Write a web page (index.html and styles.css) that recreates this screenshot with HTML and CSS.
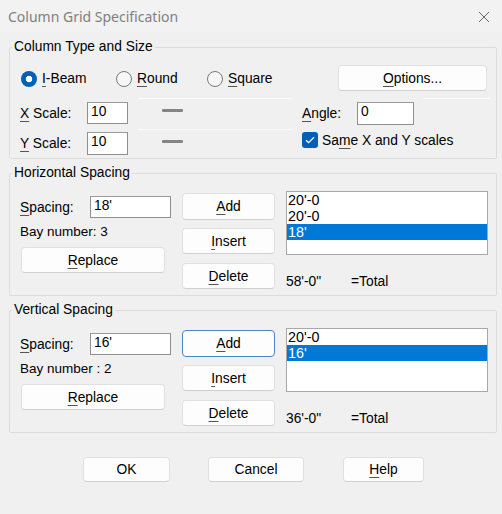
FILE: index.html
```html
<!DOCTYPE html>
<html>
<head>
<meta charset="utf-8">
<link rel="stylesheet" href="styles.css">
</head>
<body>
<div class="dialog">
  <div class="titlebar">
    <span class="title">Column Grid Specification</span>
    <svg class="close" width="12" height="12" viewBox="0 0 12 12"><path d="M1 1L11 11M11 1L1 11" stroke="#666" stroke-width="1" fill="none"/></svg>
  </div>
  <div class="content">
    <fieldset class="group g1">
      <legend>Column Type and Size</legend>
      <div class="type-row">
        <span class="radio-item w1"><span class="radio on"></span><span><u>I</u>-Beam</span></span>
        <span class="radio-item w2"><span class="radio"></span><span><u>R</u>ound</span></span>
        <span class="radio-item"><span class="radio"></span><span><u>S</u>quare</span></span>
        <span class="btn options"><u>O</u>ptions...</span>
      </div>
      <div class="scale-row r1">
        <span class="lbl"><u>X</u> Scale:</span>
        <span class="edit small">10</span>
        <span class="slider"><span class="dash"></span></span>
        <span class="lbl angle"><u>A</u>ngle:</span>
        <span class="edit angle-edit">0</span>
        <span class="slider short"></span>
      </div>
      <div class="scale-row r2">
        <span class="lbl"><u>Y</u> Scale:</span>
        <span class="edit small">10</span>
        <span class="slider"><span class="dash"></span></span>
        <span class="check"><svg width="10" height="8" viewBox="0 0 10 8"><path d="M1 4.2L3.6 6.6L9 1.2" stroke="#fff" stroke-width="1.3" fill="none"/></svg></span>
        <span class="check-text">Sa<u>m</u>e X and Y scales</span>
      </div>
    </fieldset>

    <fieldset class="group spacing">
      <legend>Horizontal Spacing</legend>
      <div class="sp-grid">
        <div class="left">
          <div class="sp-row"><span class="sp-lbl"><u>S</u>pacing:</span><span class="edit wide">18'</span></div>
          <div class="bay">Bay number: 3</div>
          <span class="btn replace"><u>R</u>eplace</span>
        </div>
        <div class="mid">
          <span class="btn act add"><u>A</u>dd</span>
          <span class="btn act ins"><u>I</u>nsert</span>
          <span class="btn act del"><u>D</u>elete</span>
        </div>
        <div class="right">
          <div class="list">
            <div class="item">20'-0</div>
            <div class="item">20'-0</div>
            <div class="item sel">18'</div>
          </div>
          <div class="total"><span class="tval">58'-0"</span><span>=Total</span></div>
        </div>
      </div>
    </fieldset>

    <fieldset class="group spacing">
      <legend>Vertical Spacing</legend>
      <div class="sp-grid">
        <div class="left">
          <div class="sp-row"><span class="sp-lbl"><u>S</u>pacing:</span><span class="edit wide">16'</span></div>
          <div class="bay">Bay number : 2</div>
          <span class="btn replace"><u>R</u>eplace</span>
        </div>
        <div class="mid">
          <span class="btn act add focus"><u>A</u>dd</span>
          <span class="btn act ins"><u>I</u>nsert</span>
          <span class="btn act del"><u>D</u>elete</span>
        </div>
        <div class="right">
          <div class="list">
            <div class="item">20'-0</div>
            <div class="item sel">16'</div>
          </div>
          <div class="total"><span class="tval">36'-0"</span><span>=Total</span></div>
        </div>
      </div>
    </fieldset>

    <div class="footer">
      <span class="btn ok">OK</span>
      <span class="btn cancel">Cancel</span>
      <span class="btn help"><u>H</u>elp</span>
    </div>
  </div>
</div>
</body>
</html>
```

FILE: styles.css
```css
html, body {
  margin: 0;
  padding: 0;
  background: #f0f0f0;
}
.dialog {
  width: 502px;
  height: 514px;
  overflow: hidden;
  background: #f0f0f0;
  font-family: "Liberation Sans", Arial, sans-serif;
  font-size: 13.3px;
  color: #000;
}
u {
  text-decoration: underline;
  text-underline-offset: 3px;
  text-decoration-thickness: 1px;
  text-decoration-color: #555;
}
.titlebar {
  height: 32px;
  display: flex;
  align-items: center;
  justify-content: space-between;
  padding: 0 12px 0 8px;
  background: #f2f2f2;
}
.title {
  font-family: "Noto Sans", "Open Sans", sans-serif;
  font-size: 14px;
  color: #808080;
}
.close {
  margin-top: 1px;
}
.content {
  padding: 7px 0 0 9px;
}
.group {
  margin: 0;
  padding: 0;
  width: 488px;
  box-sizing: border-box;
  border: 1px solid #dcdcdc;
  border-radius: 2px;
}
.group legend {
  margin-left: 2px;
  padding: 0 2px;
  line-height: 16px;
  font-size: 13.8px;
}
.spacing {
  margin-top: 6px;
}

/* group 1 */
.type-row {
  display: flex;
  align-items: center;
  height: 26px;
  margin-top: 10px;
  padding-left: 11px;
  font-size: 13.8px;
}
.radio-item {
  display: flex;
  align-items: center;
  gap: 5px;
}
.w1 { width: 95px; }
.w2 { width: 91px; }
.radio {
  width: 14px;
  height: 14px;
  border-radius: 50%;
  border: 1px solid #7a7a7a;
  background: #f7f7f7;
  flex: none;
  margin-top: 1px;
}
.radio.on {
  width: 16px;
  height: 16px;
  border: none;
  background: radial-gradient(circle, #fff 0 3px, #005fb8 3.6px);
}
.btn {
  display: flex;
  align-items: center;
  justify-content: center;
  box-sizing: border-box;
  background: #fdfdfd;
  border: 1px solid #e0e0e0;
  border-bottom-color: #d0d0d0;
  border-radius: 4px;
  font-size: 13.8px;
}
.options {
  margin-left: auto;
  margin-right: 9px;
  width: 149px;
  height: 26px;
}
.scale-row {
  display: flex;
  align-items: flex-start;
  padding-left: 10px;
  font-size: 13.8px;
}
.r1 { height: 31px; margin-top: 7px; }
.r2 { height: 29px; }
.lbl {
  width: 67px;
  line-height: 16px;
  margin-top: 8px;
}
.r2 .lbl { margin-top: 7px; }
.edit {
  box-sizing: border-box;
  background: #fff;
  border: 1px solid #8f8f8f;
  border-top-color: #9a9a9a;
  padding: 1px 3px;
  line-height: 16px;
  font-size: 13.8px;
}
.small {
  width: 41px;
  height: 22px;
  margin-top: 4px;
}
.r2 .small { margin-top: 3px; height: 23px; }
.slider {
  width: 154px;
  height: 20px;
  margin-left: 10px;
  border-top: 1px solid #fbfbfb;
}
.slider.short {
  width: 67px;
  margin-left: 9px;
}
.dash {
  display: block;
  width: 21px;
  height: 3px;
  margin: 10px 0 0 24px;
  background: #858585;
  border-radius: 1px;
}
.angle {
  width: 55px;
  margin-left: 10px;
}
.angle-edit {
  width: 57px;
  height: 23px;
  margin-top: 4px;
}
.check {
  width: 16px;
  height: 16px;
  margin: 3px 0 0 10px;
  border-radius: 3px;
  background: #005fb8;
  display: flex;
  align-items: center;
  justify-content: center;
}
.check-text {
  margin: 4px 0 0 4px;
  line-height: 16px;
  font-size: 13.8px;
}

/* spacing groups */
.sp-grid {
  display: grid;
  grid-template-columns: 172px 93px 1fr;
  height: 114px;
}
.left {
  padding: 15px 0 0 10px;
  display: flex;
  flex-direction: column;
  align-items: flex-start;
}
.sp-row {
  display: flex;
  align-items: center;
}
.sp-lbl {
  width: 70px;
  font-size: 13.8px;
}
.wide {
  width: 81px;
  height: 22px;
}
.bay {
  margin-top: 6px;
  line-height: 16px;
  font-size: 13.5px;
}
.replace {
  margin: 7px 0 0 1px;
  width: 144px;
  height: 26px;
}
.mid {
  padding-top: 12px;
  display: flex;
  flex-direction: column;
}
.act {
  width: 93px;
  height: 26px;
}
.add { height: 27px; }
.ins { margin-top: 8px; }
.del { margin-top: 9px; }
.btn.focus {
  border: 1px solid #4a86c5;
}
.right {
  padding: 10px 0 0 11px;
}
.list {
  box-sizing: border-box;
  width: 202px;
  height: 64px;
  background: #fff;
  border: 1px solid #a8a8a8;
  font-size: 14.3px;
}
.item {
  height: 16px;
  line-height: 16px;
  padding-left: 1px;
}
.item.sel {
  background: #0078d7;
  color: #fff;
}
.total {
  margin-top: 19px;
  line-height: 16px;
  display: flex;
  font-size: 13.8px;
}
.tval {
  width: 65px;
}

/* footer */
.footer {
  display: flex;
  margin-top: 24px;
  padding-left: 74px;
}
.footer .btn {
  height: 25px;
  font-size: 13.8px;
}
.ok { width: 87px; }
.cancel { width: 96px; margin-left: 38px; }
.help { width: 81px; margin-left: 39px; }
```
